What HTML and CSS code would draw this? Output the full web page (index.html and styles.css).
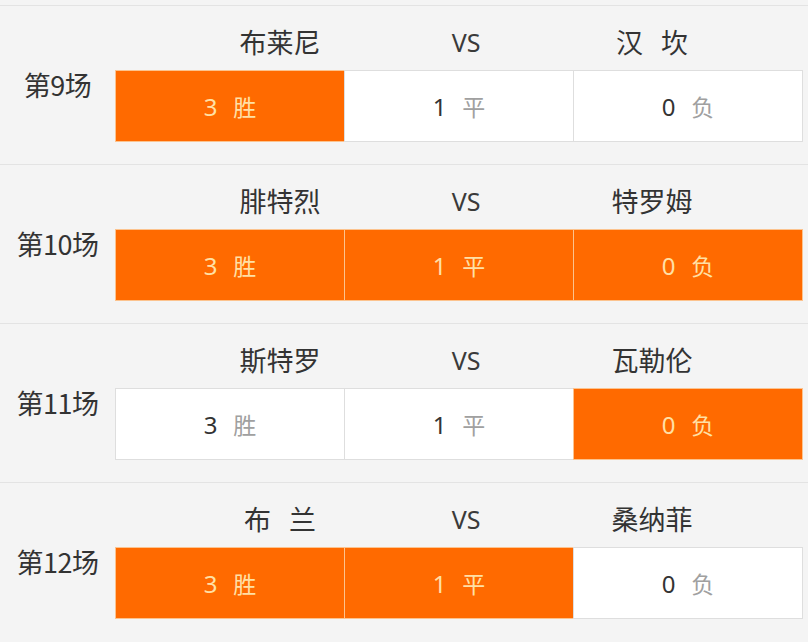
FILE: index.html
```html
<!DOCTYPE html>
<html lang="zh">
<head>
<meta charset="utf-8">
<link rel="stylesheet" href="styles.css">
</head>
<body>
<div class="page">
  <section class="match">
    <div class="label">第9场</div>
    <div class="teams"><span>布莱尼</span><span class="vs">VS</span><span class="two">汉 坎</span></div>
    <div class="odds">
      <div class="cell on"><b>3</b><i>胜</i></div>
      <div class="cell"><b>1</b><i>平</i></div>
      <div class="cell"><b>0</b><i>负</i></div>
    </div>
  </section>
  <section class="match">
    <div class="label">第10场</div>
    <div class="teams"><span>腓特烈</span><span class="vs">VS</span><span>特罗姆</span></div>
    <div class="odds">
      <div class="cell on"><b>3</b><i>胜</i></div>
      <div class="cell on"><b>1</b><i>平</i></div>
      <div class="cell on"><b>0</b><i>负</i></div>
    </div>
  </section>
  <section class="match">
    <div class="label">第11场</div>
    <div class="teams"><span>斯特罗</span><span class="vs">VS</span><span>瓦勒伦</span></div>
    <div class="odds">
      <div class="cell"><b>3</b><i>胜</i></div>
      <div class="cell"><b>1</b><i>平</i></div>
      <div class="cell on"><b>0</b><i>负</i></div>
    </div>
  </section>
  <section class="match">
    <div class="label">第12场</div>
    <div class="teams"><span class="two">布 兰</span><span class="vs">VS</span><span>桑纳菲</span></div>
    <div class="odds">
      <div class="cell on"><b>3</b><i>胜</i></div>
      <div class="cell on"><b>1</b><i>平</i></div>
      <div class="cell"><b>0</b><i>负</i></div>
    </div>
  </section>
</div>
</body>
</html>
```
FILE: styles.css
```css
html, body {
  margin: 0;
  padding: 0;
  background: #f4f4f4;
}
body {
  font-family: "Noto Sans CJK SC", "Noto Sans", sans-serif;
  color: #333;
}
.page {
  width: 808px;
  height: 642px;
  padding-top: 5px;
  box-sizing: border-box;
  overflow: hidden;
}
.match {
  display: grid;
  grid-template-columns: 115px 688px;
  grid-template-rows: 64px 72px 22px;
  border-top: 1px solid #e3e3e3;
}
.label {
  grid-column: 1;
  grid-row: 1 / 4;
  align-self: center;
  text-align: center;
  font-size: 27px;
  line-height: 36px;
  letter-spacing: -0.5px;
  color: #333;
}
.teams {
  grid-column: 2;
  grid-row: 1;
  display: grid;
  grid-template-columns: 186px 186px 186px;
  padding-left: 72px;
  padding-top: 18px;
  box-sizing: border-box;
  font-size: 27px;
  line-height: 36px;
  color: #333;
}
.teams span {
  text-align: center;
  white-space: pre;
}
.teams .two {
  word-spacing: 12px;
}
.teams .vs {
  font-family: "Noto Sans", sans-serif;
  font-size: 25px;
  color: #3a3a3a;
}
.odds {
  grid-column: 2;
  grid-row: 2;
  display: flex;
}
.cell {
  flex: 1;
  display: flex;
  align-items: center;
  justify-content: center;
  gap: 16px;
  background: #fff;
  border: 1px solid #dedede;
  margin-left: -1px;
  font-size: 24px;
}
.cell:first-child {
  margin-left: 0;
}
.cell b {
  font-weight: normal;
  color: #333;
  font-family: "Noto Sans", sans-serif;
}
.cell i {
  font-style: normal;
  color: #a0a0a0;
  font-size: 23px;
}
.cell.on {
  background: #ff6a00;
  border-color: #fcc38e;
}
.cell.on b, .cell.on i {
  color: #ffe0a6;
}
```
